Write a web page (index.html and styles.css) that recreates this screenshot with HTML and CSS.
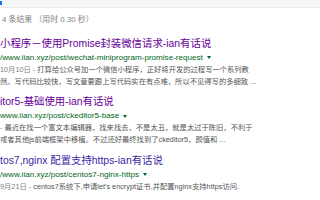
FILE: index.html
```html
<!DOCTYPE html>
<html lang="zh-CN">
<head>
<meta charset="utf-8">
<title>搜索结果</title>
<link rel="stylesheet" href="styles.css">
</head>
<body>
<div class="topbar"><span class="tab-mark"></span></div>
<div class="stats">4 条结果 （用时 0.30 秒）</div>
<div class="results">
  <div class="result">
    <a class="title visited">小程序－使用Promise封装微信请求-ian有话说</a>
    <div class="url">/www.iian.xyz/post/wechat-miniprogram-promise-request<span class="arrow"></span></div>
    <div class="snippet">
      <span class="line"><span class="date">10月10日 - </span>打算给公众号加一个微信小程序，正好将开发的过程写一个系列教</span>
      <span class="line">然。写代码比较快，写文章要跟上写代码实在有点难，所以不见得写的多细致 ...</span>
    </div>
  </div>
  <div class="result">
    <a class="title visited">itor5-基础使用-ian有话说</a>
    <div class="url">www.iian.xyz/post/ckeditor5-base<span class="arrow"></span></div>
    <div class="snippet">
      <span class="line"><span class="date">- </span>最近在找一个富文本编辑器，找来找去，不是太丑，就是太过于陈旧，不利于</span>
      <span class="line">或者其他js前端框架中移植。不过还好最终找到了ckeditor5，颜值和 ...</span>
    </div>
  </div>
  <div class="result">
    <a class="title fresh">tos7,nginx 配置支持https-ian有话说</a>
    <div class="url">/www.iian.xyz/post/centos7-nginx-https<span class="arrow"></span></div>
    <div class="snippet">
      <span class="line"><span class="date">9月21日 - </span>centos7系统下,申请let's encrypt证书,并配置nginx支持https访问.</span>
    </div>
  </div>
</div>
</body>
</html>
```
FILE: styles.css
```css
html, body {
  margin: 0;
  padding: 0;
  background: #ffffff;
}
body {
  font-family: "Liberation Sans", Arial, "Noto Sans CJK SC", sans-serif;
  overflow: hidden;
}
.topbar {
  display: flex;
  height: 7px;
  background: #f6f6f8;
  border-bottom: 1px solid #ebebeb;
}
.tab-mark {
  width: 2px;
  height: 4px;
  margin-top: 1px;
  background: #1a73e8;
}
.stats {
  margin-top: 6px;
  padding-left: 2px;
  font-size: 7.9px;
  line-height: 11px;
  color: #808080;
  white-space: nowrap;
}
.results {
  margin-top: 11.5px;
  display: flex;
  flex-direction: column;
  gap: 7.5px;
}
.title {
  display: block;
  font-size: 10.4px;
  line-height: 14px;
  white-space: nowrap;
  text-decoration: none;
}
.visited { color: #660099; }
.fresh { color: #3c1fa8; }
.url {
  display: flex;
  align-items: center;
  font-size: 8.1px;
  line-height: 13px;
  color: #006621;
  white-space: nowrap;
}
.arrow {
  width: 0;
  height: 0;
  margin-left: 4px;
  margin-top: 1px;
  border-left: 2.5px solid transparent;
  border-right: 2.5px solid transparent;
  border-top: 3px solid #006621;
}
.snippet {
  display: flex;
  flex-direction: column;
  font-size: 7.3px;
  line-height: 12px;
  color: #545454;
}
.line {
  white-space: nowrap;
}
.date {
  color: #808080;
}
```
